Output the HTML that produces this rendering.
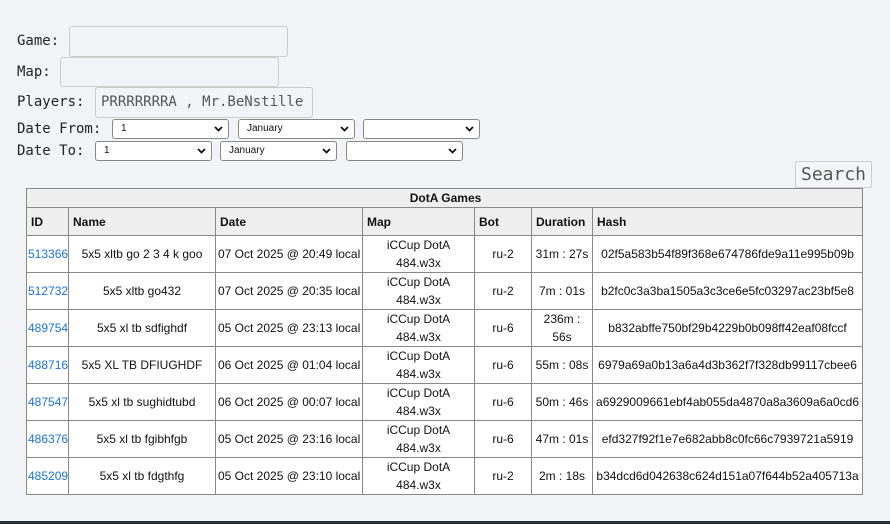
<!DOCTYPE html>
<html><head><meta charset="utf-8"><style>
body{margin:0;width:890px;height:524px;background:#f2f3f7;position:relative;overflow:hidden;font-family:"Liberation Sans",Arial,sans-serif;}
.lbl{position:absolute;font-family:"DejaVu Sans Mono","Liberation Mono",monospace;font-size:14px;color:#222;line-height:16px;}
.inp{position:absolute;box-sizing:border-box;border:1px solid #ccc;border-radius:3px;background:#f2f3f7;font-family:"DejaVu Sans Mono",monospace;font-size:14px;color:#555;padding-left:5px;line-height:29px;white-space:nowrap;overflow:hidden;}
.sel{position:absolute;box-sizing:border-box;height:20px;border:1px solid #888;border-radius:3px;background:#fff;font-size:10px;color:#111;padding-left:8px;line-height:18px;}
.sel svg{position:absolute;right:5px;top:6px;}
.btn{position:absolute;left:795px;top:161px;width:77px;height:27px;box-sizing:border-box;border:1px solid #ccc;border-radius:2px;background:#f4f5f8;font-family:"DejaVu Sans Mono",monospace;font-size:18px;color:#555;text-align:center;line-height:25px;}
table{position:absolute;left:26px;top:188px;border-collapse:collapse;table-layout:fixed;width:836px;font-size:12px;color:#111;}
td,th{border:1px solid #888;padding:0 2px;}
th{background:#eeeeee;font-weight:bold;text-align:left;height:27px;padding-left:4px;}
th.t{text-align:center;height:18px;}
td{background:#fff;height:35px;text-align:center;line-height:18px;white-space:nowrap;overflow:hidden;}
td.id{text-align:left;color:#1a73d9;padding-left:1px;}
.bar{position:absolute;left:0;top:521px;width:890px;height:3px;background:#2b3038;}
</style></head><body>
<div class="lbl" style="left:17px;top:33px">Game:</div>
<div class="inp" style="left:69px;top:26px;width:219px;height:31px"></div>
<div class="lbl" style="left:17px;top:64px">Map:</div>
<div class="inp" style="left:60px;top:57px;width:219px;height:30px"></div>
<div class="lbl" style="left:17px;top:94px">Players:</div>
<div class="inp" style="left:95px;top:87px;width:218px;height:31px">PRRRRRRRA , Mr.BeNstille</div>
<div class="lbl" style="left:17px;top:121px">Date From:</div>
<div class="lbl" style="left:17px;top:143px">Date To:</div>
<div class="sel" style="left:112px;top:119px;width:117px">1<svg width="9" height="6"><path d="M1 1l3.5 3.5L8 1" stroke="#111" stroke-width="1.8" fill="none"/></svg></div>
<div class="sel" style="left:238px;top:119px;width:117px">January<svg width="9" height="6"><path d="M1 1l3.5 3.5L8 1" stroke="#111" stroke-width="1.8" fill="none"/></svg></div>
<div class="sel" style="left:363px;top:119px;width:117px"><svg width="9" height="6"><path d="M1 1l3.5 3.5L8 1" stroke="#111" stroke-width="1.8" fill="none"/></svg></div>
<div class="sel" style="left:95px;top:141px;width:117px">1<svg width="9" height="6"><path d="M1 1l3.5 3.5L8 1" stroke="#111" stroke-width="1.8" fill="none"/></svg></div>
<div class="sel" style="left:220px;top:141px;width:117px">January<svg width="9" height="6"><path d="M1 1l3.5 3.5L8 1" stroke="#111" stroke-width="1.8" fill="none"/></svg></div>
<div class="sel" style="left:346px;top:141px;width:117px"><svg width="9" height="6"><path d="M1 1l3.5 3.5L8 1" stroke="#111" stroke-width="1.8" fill="none"/></svg></div>
<div class="btn">Search</div>
<table>
<colgroup><col style="width:42px"><col style="width:147px"><col style="width:147px"><col style="width:112px"><col style="width:57px"><col style="width:61px"><col style="width:270px"></colgroup>
<tr><th class="t" colspan="7">DotA Games</th></tr>
<tr><th>ID</th><th>Name</th><th>Date</th><th>Map</th><th>Bot</th><th>Duration</th><th>Hash</th></tr>
<tr><td class="id">513366</td><td>5x5 xltb go 2 3 4 k goo</td><td>07 Oct 2025 @ 20:49 local</td><td>iCCup DotA<br>484.w3x</td><td>ru-2</td><td>31m : 27s</td><td>02f5a583b54f89f368e674786fde9a11e995b09b</td></tr>
<tr><td class="id">512732</td><td>5x5 xltb go432</td><td>07 Oct 2025 @ 20:35 local</td><td>iCCup DotA<br>484.w3x</td><td>ru-2</td><td>7m : 01s</td><td>b2fc0c3a3ba1505a3c3ce6e5fc03297ac23bf5e8</td></tr>
<tr><td class="id">489754</td><td>5x5 xl tb sdfighdf</td><td>05 Oct 2025 @ 23:13 local</td><td>iCCup DotA<br>484.w3x</td><td>ru-6</td><td>236m :<br>56s</td><td>b832abffe750bf29b4229b0b098ff42eaf08fccf</td></tr>
<tr><td class="id">488716</td><td>5x5 XL TB DFIUGHDF</td><td>06 Oct 2025 @ 01:04 local</td><td>iCCup DotA<br>484.w3x</td><td>ru-6</td><td>55m : 08s</td><td>6979a69a0b13a6a4d3b362f7f328db99117cbee6</td></tr>
<tr><td class="id">487547</td><td>5x5 xl tb sughidtubd</td><td>06 Oct 2025 @ 00:07 local</td><td>iCCup DotA<br>484.w3x</td><td>ru-6</td><td>50m : 46s</td><td>a6929009661ebf4ab055da4870a8a3609a6a0cd6</td></tr>
<tr><td class="id">486376</td><td>5x5 xl tb fgibhfgb</td><td>05 Oct 2025 @ 23:16 local</td><td>iCCup DotA<br>484.w3x</td><td>ru-6</td><td>47m : 01s</td><td>efd327f92f1e7e682abb8c0fc66c7939721a5919</td></tr>
<tr><td class="id">485209</td><td>5x5 xl tb fdgthfg</td><td>05 Oct 2025 @ 23:10 local</td><td>iCCup DotA<br>484.w3x</td><td>ru-2</td><td>2m : 18s</td><td>b34dcd6d042638c624d151a07f644b52a405713a</td></tr>
</table>
<div class="bar"></div>
</body></html>
